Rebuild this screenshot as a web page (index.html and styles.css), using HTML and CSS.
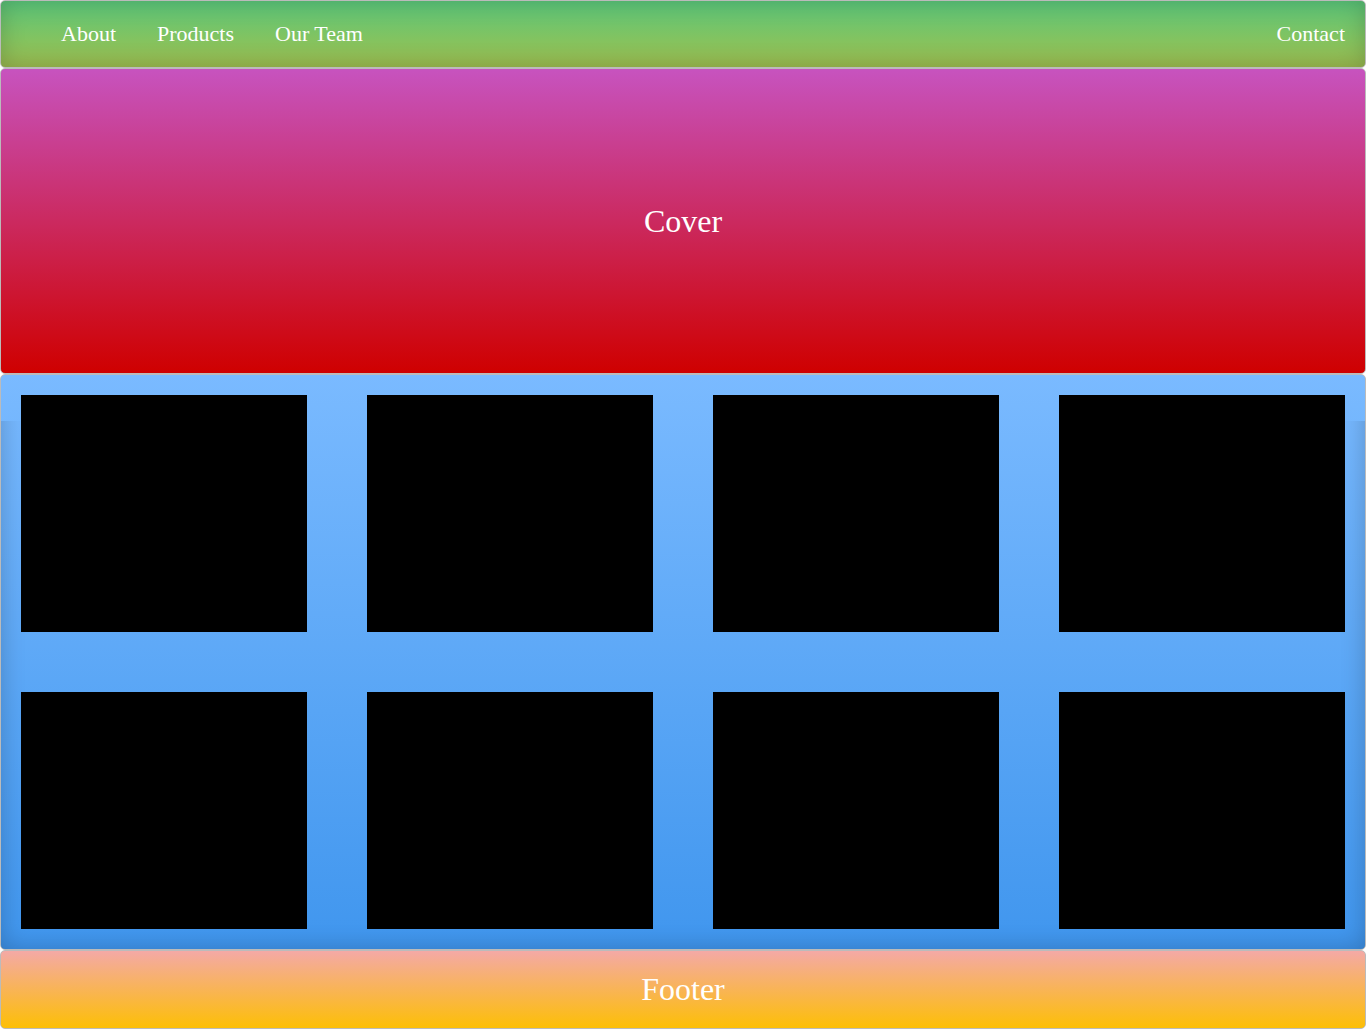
FILE: index.html
```html
<!DOCTYPE html>
<html lang="en">
<head>
<meta charset="utf-8">
<title>Home</title>
<link rel="stylesheet" href="styles.css">
</head>
<body>
<header class="panel navbar">
  <nav class="nav-links">
    <a href="#about">About</a>
    <a href="#products">Products</a>
    <a href="#team">Our Team</a>
  </nav>
  <a href="#contact">Contact</a>
</header>
<section class="panel cover">Cover</section>
<main class="panel content">
  <div class="card"></div>
  <div class="card"></div>
  <div class="card"></div>
  <div class="card"></div>
  <div class="card"></div>
  <div class="card"></div>
  <div class="card"></div>
  <div class="card"></div>
</main>
<footer class="panel footer">Footer</footer>
</body>
</html>
```
FILE: styles.css
```css
* {
  box-sizing: border-box;
}

body {
  margin: 0;
  background: #fff;
  color: #fff;
  font-family: "Liberation Serif", "Times New Roman", serif;
}

.panel {
  border: 1px solid #bbb;
  border-radius: 5px;
  padding: 20px;
}

.navbar {
  display: flex;
  justify-content: space-between;
  font-size: 22px;
  line-height: 26px;
  background: linear-gradient(#5bc67a, #84c35f 60%, #9cbc50);
  box-shadow: inset 0 0 25px rgba(0, 0, 0, 0.2);
}

.navbar a {
  color: inherit;
  text-decoration: none;
}

.nav-links {
  display: flex;
  gap: 41px;
  padding-left: 40px;
}

.cover,
.footer {
  font-size: 32px;
  line-height: 37px;
  text-align: center;
}

.cover {
  padding: 134px 20px 133px;
  background: linear-gradient(#c753bf, #cf0000);
}

.content {
  position: relative;
  display: grid;
  grid-template-columns: repeat(4, 1fr);
  grid-auto-rows: 237px;
  gap: 60px;
  background: linear-gradient(#7abaff, #4096ee);
}

/* Inner shade along the sides and bottom, leaving the top band clear */
.content::before {
  content: "";
  position: absolute;
  inset: 0;
  border-radius: 4px;
  box-shadow: inset 0 0 25px rgba(0, 0, 0, 0.22);
  clip-path: inset(46px 0 0 0);
}

.card {
  position: relative;
  background: #000;
}

.footer {
  background: linear-gradient(#f4a9a6, #fdbf06);
}
```
